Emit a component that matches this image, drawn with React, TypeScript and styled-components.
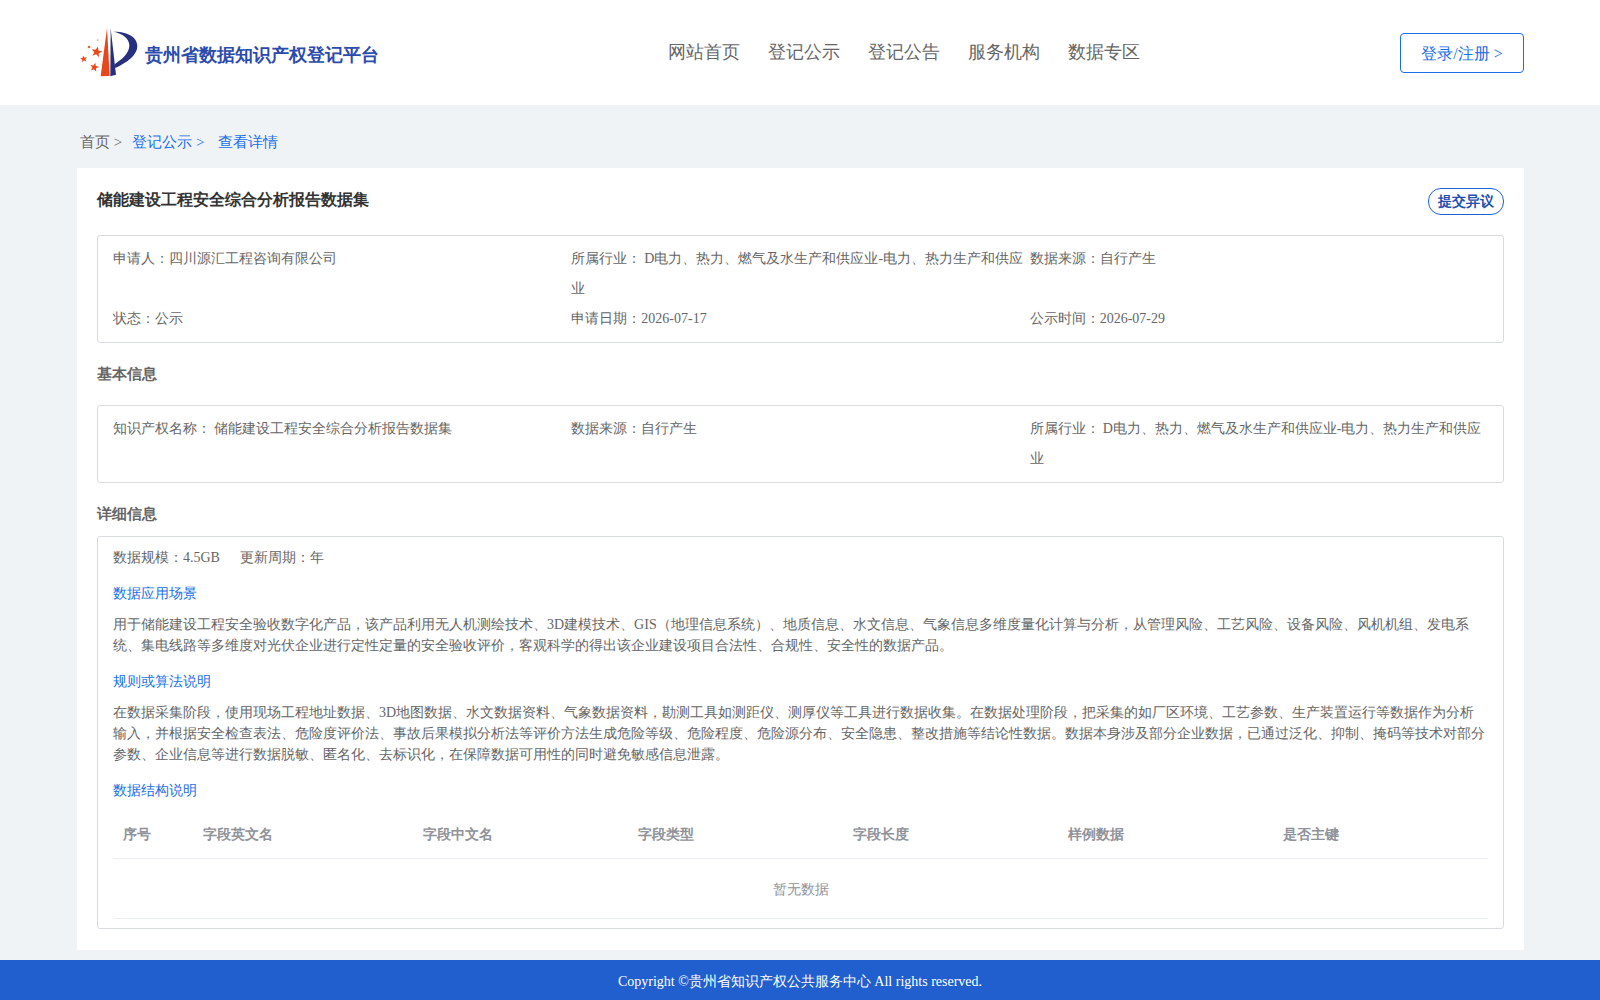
import React from "react";
import styled, { createGlobalStyle } from "styled-components";

const FONT = `"Liberation Serif", serif`;

const Global = createGlobalStyle`
  html, body { margin: 0; padding: 0; background: #eff3f6; }
  body { font-family: ${FONT}; color: #666; font-size: 14px; }
`;
const Page = styled.div`
  min-height: 1000px; display: flex; flex-direction: column; background: #eff3f6;
`;
const Header = styled.header`
  height: 105px; background: #fff; display: flex; align-items: center; padding: 0 76px 0 80px; box-sizing: border-box;
`;
const Brand = styled.div`
  display: flex; align-items: center; gap: 4px; width: 588px; margin-top: -1px;
`;
const BrandName = styled.span`
  font-size: 18px; font-weight: 700; color: #2b4bad; margin-top: 6px; margin-left: 1px; white-space: nowrap;
`;
const Nav = styled.nav`
  display: flex; gap: 28px; margin-top: -2px;
`;
const NavItem = styled.a`
  font-size: 18px; color: #666; line-height: 26px;
`;
const LoginButton = styled.button`
  margin-left: auto; width: 124px; height: 40px; margin-top: 1px; background: #fff; border: 1px solid #1a6fe8; border-radius: 4px;
  color: #1a6fe8; font: 16px ${FONT}; padding: 2px 0 0;
`;
const Crumbs = styled.div`
  display: flex; align-items: center; height: 22px; margin: 26px 0 15px 80px; font-size: 15px; color: #666;
`;
const Crumb = styled.span<{ $link?: boolean; $gap?: number }>`
  color: ${(p) => (p.$link ? "#1a6fe8" : "#666")};
  margin-right: ${(p) => p.$gap ?? 0}px;
`;
const Card = styled.main`
  margin: 0 76px 10px 77px; background: #fff; padding: 20px 20px 21px; box-sizing: border-box;
`;
const TitleRow = styled.div`
  display: flex; justify-content: space-between; align-items: flex-start; height: 26px; margin-bottom: 21px;
`;
const Title = styled.h1`
  margin: 0; font-size: 16px; font-weight: 700; color: #333; line-height: 24px;
`;
const Objection = styled.button`
  height: 27px; width: 76px; border-radius: 13px; border: 1px solid #1a62d6; background: #fff; color: #2350b0;
  font: 700 14px ${FONT}; padding: 0;
`;
const InfoBox = styled.section`
  border: 1px solid #d9dcdf; border-radius: 3px; padding: 8px 15px; display: grid; grid-template-columns: repeat(3, 1fr);
`;
const InfoCell = styled.div`
  line-height: 30px; font-size: 14px; color: #666; padding-right: 5px;
`;
const InfoValue = styled.span`
  margin-left: 3px;
`;
const SectionTitle = styled.h2<{ $below: number }>`
  margin: 20px 0 ${(p) => p.$below}px; font-size: 15px; font-weight: 700; color: #666; line-height: 22px;
`;
const DetailBox = styled.section`
  border: 1px solid #d9dcdf; border-radius: 3px; padding: 9px 15px 9px;
`;
const Stats = styled.div`
  display: flex; gap: 20px; line-height: 24px; margin-bottom: 13px;
`;
const SubTitle = styled.div`
  color: #1a6fe8; line-height: 21px; margin-bottom: 10px;
`;
const Para = styled.p`
  margin: 0 0 15px; line-height: 21px; color: #666;
`;
const Table = styled.table`
  width: 100%; border-collapse: collapse; table-layout: fixed; margin-top: 7px;
`;
const Th = styled.th<{ $w?: number }>`
  box-sizing: border-box; width: ${(p) => (p.$w ? `${p.$w}px` : "auto")}; height: 47px; padding: 1px 10px 0; text-align: left; font-size: 14px; font-weight: 700; color: #909399;
  border-bottom: 1px solid #ebeef5;
`;
const Empty = styled.td`
  height: 56px; padding: 3px 0 0; text-align: center; color: #909399; border-bottom: 1px solid #ebeef5;
`;
const Footer = styled.footer`
  margin-top: auto; height: 40px; box-sizing: border-box; padding-top: 4px; background: #215fcf; color: #fff; display: flex; align-items: center; justify-content: center; font-size: 14px;
`;

const Star = ({ cx, cy, r, rot = 0 }: { cx: number; cy: number; r: number; rot?: number }) => {
  const pts = Array.from({ length: 10 }, (_, i) => {
    const rad = i % 2 === 0 ? r : r * 0.42;
    const a = (-90 + rot + i * 36) * (Math.PI / 180);
    return `${(cx + rad * Math.cos(a)).toFixed(1)},${(cy + rad * Math.sin(a)).toFixed(1)}`;
  }).join(" ");
  return <polygon points={pts} fill="#e8471c" />;
};

const Logo = () => (
  <svg width="60" height="52" viewBox="60 50 180 156" aria-hidden="true">
    <Star cx={110} cy={128} r={17} rot={12} />
    <Star cx={71} cy={149} r={11} rot={-10} />
    <Star cx={103} cy={174} r={14} rot={12} />
    <circle cx={87} cy={113} r={4} fill="#e8673c" />
    <circle cx={113} cy={92} r={2.5} fill="#ef8a66" />
    <polygon points="141,57 149,200 122,201" fill="#e8471c" />
    <polygon points="152,57 168,196 151,201" fill="#27307f" />
    <path d="M160 67 C200 66 232 82 232 110 C232 138 200 160 166 176 L164 165 C186 150 208 132 208 108 C208 88 188 72 160 67 Z" fill="#27307f" />
  </svg>
);

const cols = ["字段英文名", "字段中文名", "字段类型", "字段长度", "样例数据", "是否主键"];

export default function App() {
  return (
    <Page>
      <Global />
      <Header>
        <Brand>
          <Logo />
          <BrandName>贵州省数据知识产权登记平台</BrandName>
        </Brand>
        <Nav>
          {["网站首页", "登记公示", "登记公告", "服务机构", "数据专区"].map((n) => (
            <NavItem key={n}>{n}</NavItem>
          ))}
        </Nav>
        <LoginButton>登录/注册 &gt;</LoginButton>
      </Header>
      <Crumbs>
        <Crumb $gap={10}>首页 &gt;</Crumb>
        <Crumb $link $gap={14}>登记公示 &gt;</Crumb>
        <Crumb $link>查看详情</Crumb>
      </Crumbs>
      <Card>
        <TitleRow>
          <Title>储能建设工程安全综合分析报告数据集</Title>
          <Objection>提交异议</Objection>
        </TitleRow>
        <InfoBox>
          <InfoCell>申请人：四川源汇工程咨询有限公司</InfoCell>
          <InfoCell>所属行业：<InfoValue>D电力、热力、燃气及水生产和供应业-电力、热力生产和供应业</InfoValue></InfoCell>
          <InfoCell>数据来源：自行产生</InfoCell>
          <InfoCell>状态：公示</InfoCell>
          <InfoCell>申请日期：2026-07-17</InfoCell>
          <InfoCell>公示时间：2026-07-29</InfoCell>
        </InfoBox>
        <SectionTitle $below={20}>基本信息</SectionTitle>
        <InfoBox>
          <InfoCell>知识产权名称：<InfoValue>储能建设工程安全综合分析报告数据集</InfoValue></InfoCell>
          <InfoCell>数据来源：自行产生</InfoCell>
          <InfoCell>所属行业：<InfoValue>D电力、热力、燃气及水生产和供应业-电力、热力生产和供应业</InfoValue></InfoCell>
        </InfoBox>
        <SectionTitle $below={11}>详细信息</SectionTitle>
        <DetailBox>
          <Stats>
            <span>数据规模：4.5GB</span>
            <span>更新周期：年</span>
          </Stats>
          <SubTitle>数据应用场景</SubTitle>
          <Para>用于储能建设工程安全验收数字化产品，该产品利用无人机测绘技术、3D建模技术、GIS（地理信息系统）、地质信息、水文信息、气象信息多维度量化计算与分析，从管理风险、工艺风险、设备风险、风机机组、发电系统、集电线路等多维度对光伏企业进行定性定量的安全验收评价，客观科学的得出该企业建设项目合法性、合规性、安全性的数据产品。</Para>
          <SubTitle>规则或算法说明</SubTitle>
          <Para>在数据采集阶段，使用现场工程地址数据、3D地图数据、水文数据资料、气象数据资料，勘测工具如测距仪、测厚仪等工具进行数据收集。在数据处理阶段，把采集的如厂区环境、工艺参数、生产装置运行等数据作为分析输入，并根据安全检查表法、危险度评价法、事故后果模拟分析法等评价方法生成危险等级、危险程度、危险源分布、安全隐患、整改措施等结论性数据。数据本身涉及部分企业数据，已通过泛化、抑制、掩码等技术对部分参数、企业信息等进行数据脱敏、匿名化、去标识化，在保障数据可用性的同时避免敏感信息泄露。</Para>
          <SubTitle>数据结构说明</SubTitle>
          <Table>
            <thead>
              <tr>
                <Th $w={80}>序号</Th>
                <Th $w={220}>{cols[0]}</Th>
                {cols.slice(1).map((c) => (
                  <Th key={c}>{c}</Th>
                ))}
              </tr>
            </thead>
            <tbody>
              <tr>
                <Empty colSpan={7}>暂无数据</Empty>
              </tr>
            </tbody>
          </Table>
        </DetailBox>
      </Card>
      <Footer>Copyright ©贵州省知识产权公共服务中心 All rights reserved.</Footer>
    </Page>
  );
}
